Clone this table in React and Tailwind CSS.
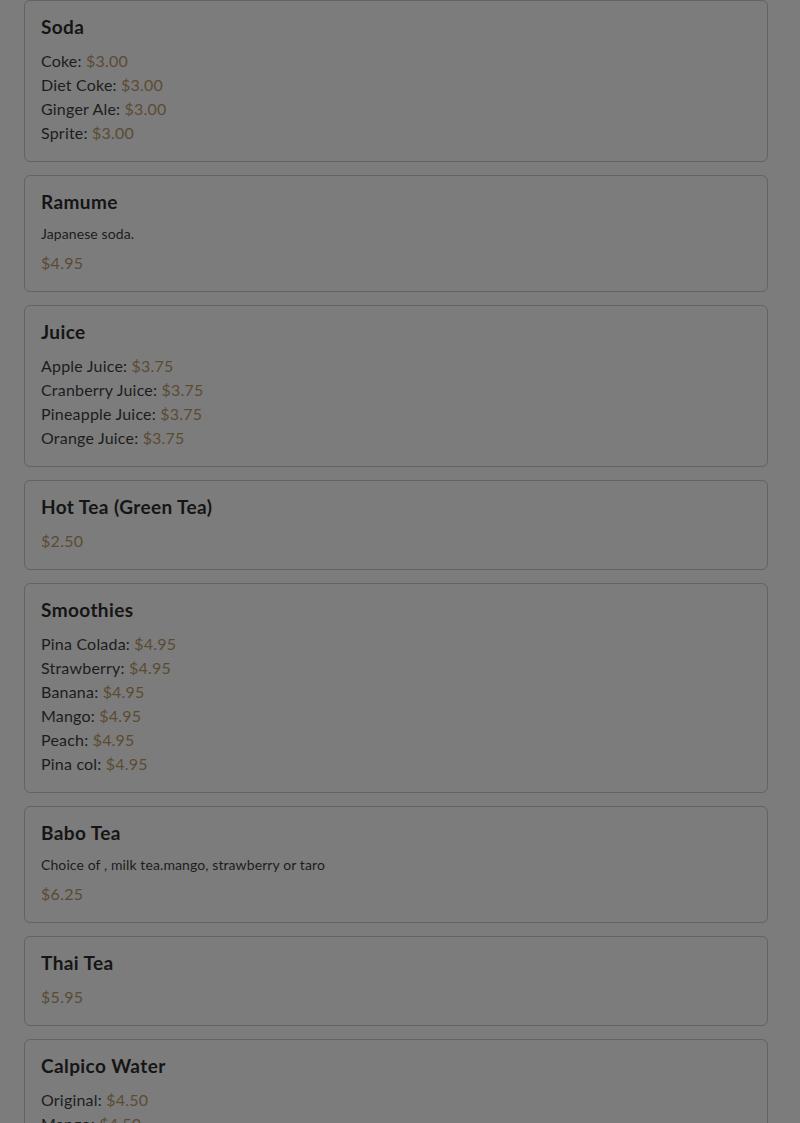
const menu = [
  {
    name: 'Soda',
    items: [
      ['Coke', '$3.00'],
      ['Diet Coke', '$3.00'],
      ['Ginger Ale', '$3.00'],
      ['Sprite', '$3.00'],
    ],
  },
  { name: 'Ramume', desc: 'Japanese soda.', price: '$4.95' },
  {
    name: 'Juice',
    items: [
      ['Apple Juice', '$3.75'],
      ['Cranberry Juice', '$3.75'],
      ['Pineapple Juice', '$3.75'],
      ['Orange Juice', '$3.75'],
    ],
  },
  { name: 'Hot Tea (Green Tea)', price: '$2.50' },
  {
    name: 'Smoothies',
    items: [
      ['Pina Colada', '$4.95'],
      ['Strawberry', '$4.95'],
      ['Banana', '$4.95'],
      ['Mango', '$4.95'],
      ['Peach', '$4.95'],
      ['Pina col', '$4.95'],
    ],
  },
  { name: 'Babo Tea', desc: 'Choice of , milk tea.mango, strawberry or taro', price: '$6.25' },
  { name: 'Thai Tea', price: '$5.95' },
  {
    name: 'Calpico Water',
    items: [
      ['Original', '$4.50'],
      ['Mango', '$4.50'],
      ['Strawberry', '$4.50'],
    ],
  },
];

function MenuCard({ section }) {
  return (
    <div className="rounded-md border border-[#636363] px-4 py-4">
      <h3 className="text-[19px] leading-[20px] font-bold tracking-[0.4px] text-[#151515]">{section.name}</h3>
      <div className="mt-3">
        {section.desc && (
          <p className="text-[14px] leading-[20px] tracking-[0.1px] text-[#1c1c1c] mb-[7px]">{section.desc}</p>
        )}
        {section.price && (
          <p className="text-[16px] leading-[24px] tracking-[0.3px] text-[#5b4b33]">{section.price}</p>
        )}
        {section.items &&
          section.items.map(([label, price]) => (
            <p key={label} className="text-[16px] leading-[24px] tracking-[0.2px] text-[#1c1c1c]">
              {label}: <span className="text-[#5b4b33]">{price}</span>
            </p>
          ))}
      </div>
    </div>
  );
}

export default function App() {
  return (
    <div
      className="bg-[#7c7c7c] pl-6 pr-8 h-[1123px] overflow-hidden"
      style={{ fontFamily: 'Lato, "Noto Sans", sans-serif' }}
    >
      <div className="flex flex-col gap-[13px]">
        {menu.map((s) => (
          <MenuCard key={s.name} section={s} />
        ))}
      </div>
    </div>
  );
}
